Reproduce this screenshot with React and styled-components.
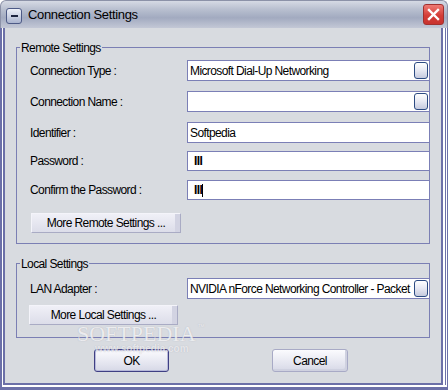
import React from "react";
import styled, { createGlobalStyle } from "styled-components";

const GlobalStyle = createGlobalStyle`
  html, body {
    margin: 0;
    padding: 0;
    background: #ffffff;
  }
  body {
    font-family: "Liberation Sans", Arial, sans-serif;
  }
`;

const Window = styled.div`
  width: 448px;
  height: 390px;
  display: flex;
  flex-direction: column;
  font-family: "Liberation Sans", Arial, sans-serif;
  font-size: 12px;
  letter-spacing: -0.6px;
  color: #000;
`;

const TitleBar = styled.div`
  height: 28px;
  box-sizing: border-box;
  display: flex;
  align-items: center;
  padding: 0 3px 0 5px;
  border: 1px solid #8c92a8;
  border-bottom: none;
  border-radius: 6px 6px 0 0;
  background: linear-gradient(#d6dae4 0%, #b9c0d0 30%, #a2aac0 62%, #c3c8d6 100%);
`;

const MenuIcon = styled.div`
  width: 16px;
  height: 16px;
  margin-top: 2px;
  box-sizing: border-box;
  border: 1px solid #4d5a86;
  border-radius: 3px;
  background: linear-gradient(#eef1f9, #aab4cf);
  display: flex;
  align-items: center;
  justify-content: center;

  &::after {
    content: "";
    width: 7px;
    height: 2px;
    background: #1d2440;
  }
`;

const Title = styled.span`
  margin-left: 6px;
  font-size: 13px;
  letter-spacing: -0.35px;
`;

const CloseButton = styled.div`
  margin-left: auto;
  width: 21px;
  height: 21px;
  box-sizing: border-box;
  border: 1px solid #a1312f;
  border-radius: 3px;
  background: linear-gradient(#ee7a74, #d43e38 55%, #c8322e);
  display: flex;
  align-items: center;
  justify-content: center;
`;

const Frame = styled.div`
  flex: 1;
  display: flex;
  background: #ffffff;
  border-style: solid;
  border-color: #6c70a8;
  border-width: 0 1px 3px 2px;
  padding: 0 4px 2px 1px;
`;

const Panel = styled.div`
  flex: 1;
  position: relative;
  background: #d8dbe0;
  border-style: solid;
  border-color: #6c70a8;
  border-width: 0 2px 2px 2px;
  box-shadow: 2px 0 0 #ffffff, 3px 0 0 #6c70a8;
  padding: 0 11px;
  display: flex;
  flex-direction: column;
`;

const Group = styled.div`
  position: relative;
  margin-top: 19px;
  border: 1px solid #7b7fb4;
  padding: ${(p) => p.$pad};
  display: flex;
  flex-direction: column;
`;

const GroupTitle = styled.span`
  position: absolute;
  top: -7px;
  left: 3px;
  padding: 0 1px;
  line-height: 14px;
  background: #d8dbe0;
`;

const Row = styled.div`
  display: flex;
  align-items: center;
  height: ${(p) => p.$h}px;
  margin-top: ${(p) => p.$mt || 0}px;
`;

const Label = styled.div`
  width: 157px;
  flex: none;
`;

const Field = styled.div`
  flex: 1;
  height: 100%;
  margin-right: -1px;
  box-sizing: border-box;
  border: 1px solid #7b7fb6;
  background: #ffffff;
  display: flex;
  align-items: center;
  padding-left: 2px;
  white-space: nowrap;
  overflow: hidden;
`;

const ComboButton = styled.div`
  margin-left: auto;
  margin-right: 1px;
  flex: none;
  width: 14px;
  height: 17px;
  box-sizing: border-box;
  border: 1px solid #2c4b82;
  border-radius: 3px;
  background: linear-gradient(#ffffff, #e6e8f2 50%, #c5cade);
`;

const Mask = styled.span`
  margin-left: 4px;
  font-weight: bold;
`;

const Caret = styled.span`
  display: inline-block;
  width: 1px;
  height: 13px;
  background: #000;
`;

const MoreButton = styled.div`
  width: ${(p) => p.$w}px;
  height: 20px;
  margin-top: ${(p) => p.$mt}px;
  margin-left: ${(p) => p.$ml}px;
  box-sizing: border-box;
  border: 1px solid;
  border-color: #f4f4fa #a9abc4 #a9abc4 #f4f4fa;
  background: linear-gradient(#f0f0f7, #dcdde9);
  box-shadow: inset -5px 0 0 #d2d3e2;
  display: flex;
  align-items: center;
  justify-content: center;
`;

const ButtonBar = styled.div`
  display: flex;
  margin-top: 11px;
`;

const DialogButton = styled.div`
  width: ${(p) => p.$w}px;
  height: 23px;
  margin-left: ${(p) => p.$ml}px;
  box-sizing: border-box;
  border: 1px solid ${(p) => (p.$default ? "#3f3f84" : "#a8aac6")};
  border-radius: 3px;
  background: linear-gradient(#fbfbfe, #e2e3ee 70%, #d6d8e6);
  box-shadow: ${(p) => (p.$default ? "inset 0 0 0 1px #b7b9da" : "inset -2px -2px 0 #cfd1e0")};
  display: flex;
  align-items: center;
  justify-content: center;
  line-height: 12px;
`;

const Watermark = styled.div`
  position: absolute;
  left: 72px;
  top: 288px;
  font-family: "Liberation Serif", "Times New Roman", serif;
  font-size: 22px;
  line-height: 22px;
  letter-spacing: 0;
  color: rgba(255, 255, 255, 0.75);
  text-shadow: 0 0 1px rgba(130, 130, 150, 0.5);
  pointer-events: none;

  sup {
    font-family: "Liberation Sans", Arial, sans-serif;
    font-size: 7px;
    vertical-align: 12px;
    margin-left: 2px;
  }
`;

const WatermarkUrl = styled.div`
  position: absolute;
  left: 90px;
  top: 317px;
  font-size: 10px;
  line-height: 7px;
  letter-spacing: 0;
  font-weight: bold;
  color: rgba(255, 255, 255, 0.65);
  text-shadow: 0 0 1px rgba(130, 130, 150, 0.45);
  pointer-events: none;
`;

const remoteRows = [
  { label: "Connection Type :", value: "Microsoft Dial-Up Networking", combo: true, h: 21, mt: 0 },
  { label: "Connection Name :", value: "", combo: true, h: 21, mt: 10 },
  { label: "Identifier :", value: "Softpedia", h: 21, mt: 10 },
  { label: "Password :", mask: true, h: 20, mt: 8 },
  { label: "Confirm the Password :", mask: true, caret: true, h: 20, mt: 9 },
];

export default function App() {
  return (
    <>
      <GlobalStyle />
      <Window>
        <TitleBar>
          <MenuIcon />
          <Title>Connection Settings</Title>
          <CloseButton>
            <svg width="13" height="13" viewBox="0 0 13 13">
              <path d="M2 2 L11 11 M11 2 L2 11" stroke="#ffffff" strokeWidth="2.4" strokeLinecap="square" />
            </svg>
          </CloseButton>
        </TitleBar>
        <Frame>
          <Panel>
            <Group $pad="12px 0 10px 13px">
              <GroupTitle>Remote Settings</GroupTitle>
              {remoteRows.map((r) => (
                <Row key={r.label} $h={r.h} $mt={r.mt}>
                  <Label>{r.label}</Label>
                  <Field>
                    {r.mask ? <Mask>III</Mask> : r.value}
                    {r.caret && <Caret />}
                    {r.combo && <ComboButton />}
                  </Field>
                </Row>
              ))}
              <MoreButton $w={150} $mt={13} $ml={1}>More Remote Settings ...</MoreButton>
            </Group>

            <Group $pad="14px 0 12px 13px">
              <GroupTitle>Local Settings</GroupTitle>
              <Row $h={21}>
                <Label>LAN Adapter :</Label>
                <Field>
                  NVIDIA nForce Networking Controller - Packet
                  <ComboButton />
                </Field>
              </Row>
              <MoreButton $w={149} $mt={6} $ml={-1}>More Local Settings ...</MoreButton>
            </Group>

            <ButtonBar>
              <DialogButton $w={75} $ml={78} $default>OK</DialogButton>
              <DialogButton $w={76} $ml={103}>Cancel</DialogButton>
            </ButtonBar>

            <Watermark>
              SOFTPEDIA<sup>™</sup>
            </Watermark>
            <WatermarkUrl>www.softpedia.com</WatermarkUrl>
          </Panel>
        </Frame>
      </Window>
    </>
  );
}
